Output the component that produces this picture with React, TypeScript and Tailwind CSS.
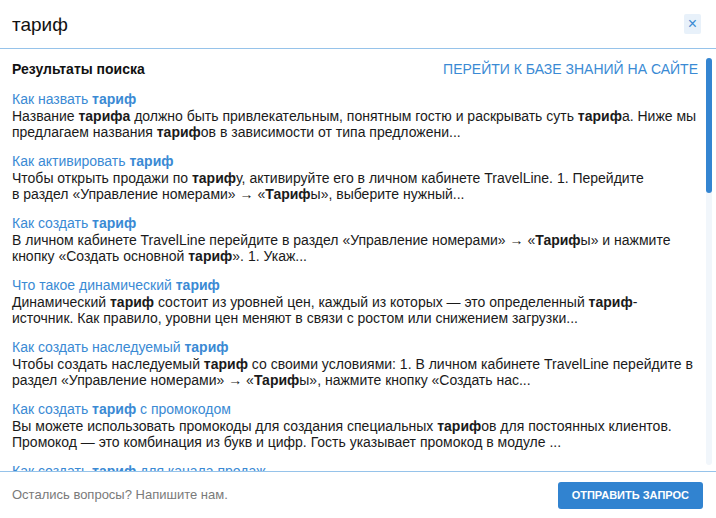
import React from "react";

type Part = string | { b: string };

interface Result {
  title: Part[];
  text: Part[];
}

const results: Result[] = [
  {
    title: ["Как назвать ", { b: "тариф" }],
    text: [
      "Название ",
      { b: "тарифа" },
      " должно быть привлекательным, понятным гостю и раскрывать суть ",
      { b: "тариф" },
      "а. Ниже мы предлагаем названия ",
      { b: "тариф" },
      "ов в зависимости от типа предложени...",
    ],
  },
  {
    title: ["Как активировать ", { b: "тариф" }],
    text: [
      "Чтобы открыть продажи по ",
      { b: "тариф" },
      "у, активируйте его в личном кабинете TravelLine. 1. Перейдите в\u00a0раздел «Управление номерами» → «",
      { b: "Тариф" },
      "ы», выберите нужный...",
    ],
  },
  {
    title: ["Как создать ", { b: "тариф" }],
    text: [
      "В личном кабинете TravelLine перейдите в раздел «Управление номерами» → «",
      { b: "Тариф" },
      "ы» и нажмите кнопку «Создать основной ",
      { b: "тариф" },
      "». 1. Укаж...",
    ],
  },
  {
    title: ["Что такое динамический ", { b: "тариф" }],
    text: [
      "Динамический ",
      { b: "тариф" },
      " состоит из уровней цен, каждый из которых — это определенный ",
      { b: "тариф" },
      "-источник. Как правило, уровни цен меняют в связи с ростом или снижением загрузки...",
    ],
  },
  {
    title: ["Как создать наследуемый ", { b: "тариф" }],
    text: [
      "Чтобы создать наследуемый ",
      { b: "тариф" },
      " со своими условиями: 1. В личном кабинете TravelLine перейдите в раздел «Управление номерами» → «",
      { b: "Тариф" },
      "ы», нажмите кнопку «Создать нас...",
    ],
  },
  {
    title: ["Как создать ", { b: "тариф" }, " с промокодом"],
    text: [
      "Вы можете использовать промокоды для создания специальных ",
      { b: "тариф" },
      "ов для постоянных клиентов. Промокод — это комбинация из букв и цифр. Гость указывает промокод в модуле ...",
    ],
  },
  {
    title: ["Как создать ", { b: "тариф" }, " для канала продаж"],
    text: [
      "Чтобы продавать ",
      { b: "тариф" },
      " только в одном канале продаж, создайте отдельный ",
      { b: "тариф" },
      "...",
    ],
  },
];

function Rich({ parts }: { parts: Part[] }) {
  return (
    <>
      {parts.map((p, i) =>
        typeof p === "string" ? <span key={i}>{p}</span> : <b key={i} className="font-bold">{p.b}</b>
      )}
    </>
  );
}

export default function App() {
  return (
    <div
      className="w-[716px] h-[518px] bg-white flex flex-col overflow-hidden"
      style={{ fontFamily: '"Liberation Sans", Arial, sans-serif' }}
    >
      {/* поле поиска */}
      <div className="h-[49px] shrink-0 flex items-center justify-between pl-3 pr-[15px] border-b border-[#96c3ea]">
        <span className="text-[19px] text-[#111] leading-none">тариф</span>
        <button className="w-[17px] h-[20px] bg-[#e8f1fa] rounded-[2px] flex items-center justify-center text-[#3b8ad3] text-[16px] leading-none">
          ×
        </button>
      </div>

      {/* результаты */}
      <div className="relative flex-1 overflow-hidden">
        <div className="pl-3 pr-[18px] pt-[12px]">
          <div className="flex items-center justify-between h-[16px]">
            <span className="text-[14px] font-bold text-[#111]">Результаты поиска</span>
            <span className="text-[14px] text-[#3a8ad4] uppercase">Перейти к базе знаний на сайте</span>
          </div>
          <div className="mt-[14px] flex flex-col gap-[13px]">
            {results.map((r, i) => (
              <div key={i}>
                <div className="text-[14px] leading-[17px] text-[#3a8ad4]">
                  <Rich parts={r.title} />
                </div>
                <div className="text-[14px] leading-[16px] text-[#1a1a1a]">
                  <Rich parts={r.text} />
                </div>
              </div>
            ))}
          </div>
        </div>
        {/* полоса прокрутки */}
        <div className="absolute right-[4px] top-[9px] bottom-[6px] w-[6px] rounded-full bg-[#f1f6fb]">
          <div className="h-[135px] w-full rounded-full bg-[#3485d1]" />
        </div>
      </div>

      {/* подвал */}
      <div className="h-[47px] shrink-0 border-t border-[#96c3ea] flex items-center justify-between pl-3 pr-[13px]">
        <span className="text-[13px] text-[#7a7a7a]">Остались вопросы? Напишите нам.</span>
        <button className="h-[27px] px-[14px] rounded-[3px] bg-[#3183d0] text-white text-[11px] font-bold uppercase">
          Отправить запрос
        </button>
      </div>
    </div>
  );
}
